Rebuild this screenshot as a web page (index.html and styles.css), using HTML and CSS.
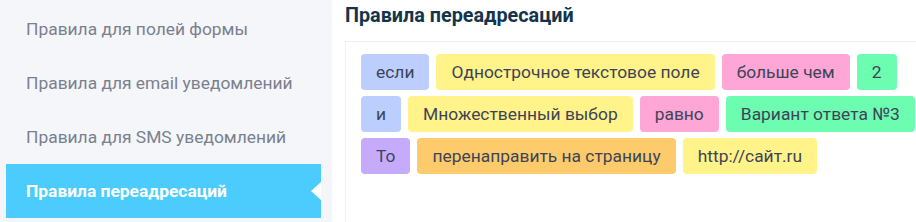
FILE: index.html
```html
<!DOCTYPE html>
<html lang="ru">
<head>
<meta charset="UTF-8" />
<title>Правила переадресаций</title>
<meta name="viewport" content="width=device-width, initial-scale=1" />
<link rel="stylesheet" href="styles.css">
</head>
<body>

<div class="page">
  <!-- ---------- SIDEBAR ---------- -->
  <nav class="sidebar">
    <a class="side-item" href="#">Правила для полей формы</a>
    <a class="side-item" href="#">Правила для email уведомлений</a>
    <a class="side-item" href="#">Правила для SMS уведомлений</a>
    <a class="side-item active" href="#">Правила переадресаций</a>
  </nav>

  <!-- ---------- RULES ---------- -->
  <main class="content">
    <h2>Правила переадресаций</h2>
    <div class="rule-box">
      <div class="rule-row">
        <span class="tag tag-op">если</span>
        <span class="tag tag-field">Однострочное текстовое поле</span>
        <span class="tag tag-cmp">больше чем</span>
        <span class="tag tag-val">2</span>
      </div>
      <div class="rule-row">
        <span class="tag tag-op">и</span>
        <span class="tag tag-field">Множественный выбор</span>
        <span class="tag tag-cmp">равно</span>
        <span class="tag tag-val">Вариант ответа №3</span>
      </div>
      <div class="rule-row">
        <span class="tag tag-then">То</span>
        <span class="tag tag-action">перенаправить на страницу</span>
        <span class="tag tag-field">http://сайт.ru</span>
      </div>
    </div>
  </main>
</div>

</body>
</html>
```

FILE: styles.css
```css
/* ---- base ---- */
body{margin:0;padding:0;background:#fff;font-family:Roboto,"Liberation Sans",Arial,sans-serif;overflow:hidden}
.page{display:flex;height:222px;width:1000px;overflow:hidden}

/* ---- sidebar ---- */
.sidebar{width:332px;flex:none;background:#f4f6fa;padding-top:2px;box-sizing:border-box;display:flex;flex-direction:column}
.side-item{position:relative;display:flex;align-items:center;height:54px;margin:0 11px 0 6px;padding-left:20px;font-size:17.4px;color:#7b808d;text-decoration:none}
.side-item.active{background:#4ccbfd;color:#fff;font-weight:bold}
.side-item.active::after{content:"";position:absolute;right:0;top:18px;border-style:solid;border-width:9px 10px 9px 0;border-color:transparent #fff transparent transparent}

/* ---- rules ---- */
.content{flex:none;width:640px;padding-left:13px}
.content h2{margin:0;height:41px;line-height:31px;font-size:19.8px;font-weight:bold;color:#13344a}
.rule-box{border:1px solid #eef0f3;border-right:none;padding:12px 15px 60px;display:flex;flex-direction:column;gap:6px}
.rule-row{display:flex;gap:7px;flex-wrap:nowrap}
.tag{display:inline-flex;align-items:center;height:36px;padding:0 15px;border-radius:4px;font-size:17.4px;color:#3d4458;white-space:nowrap}
.tag-op{background:#bccefd}
.tag-field{background:#fff389}
.tag-cmp{background:#fea6d5}
.tag-val{background:#6cfdb1}
.tag-then{background:#c6abfd}
.tag-action{background:#fdca6c}
```
